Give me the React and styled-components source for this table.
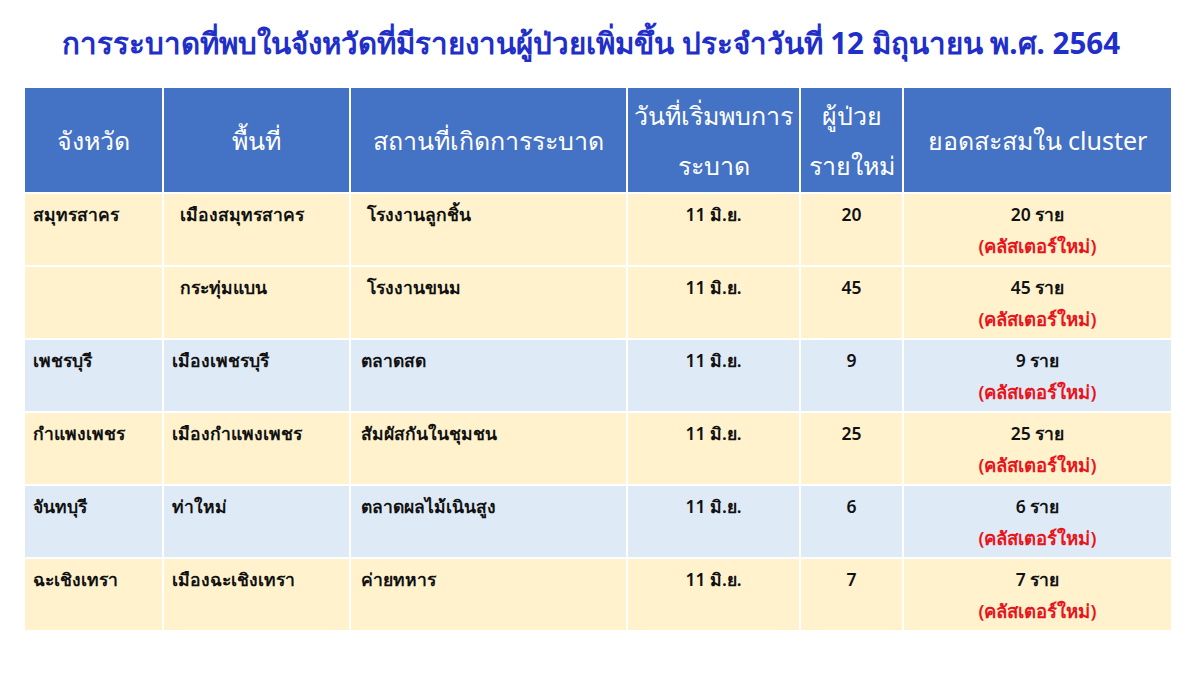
import React from "react";
import styled, { createGlobalStyle } from "styled-components";

const GlobalStyle = createGlobalStyle`
  html, body {
    margin: 0;
    padding: 0;
    background: #ffffff;
  }
  body {
    font-family: "Noto Sans", "Liberation Sans", "DejaVu Sans", sans-serif;
  }
`;

const Page = styled.div`
  width: 1200px;
  height: 675px;
  padding: 20px 0 0 25px;
  box-sizing: border-box;
`;

const Title = styled.h1`
  margin: 0 0 22px -24px;
  width: 1180px;
  text-align: center;
  font-size: 29.5px;
  font-weight: 700;
  line-height: 46px;
  color: #1f2fc8;
  white-space: nowrap;
`;

const Table = styled.table`
  border-collapse: collapse;
  table-layout: fixed;
  width: 1146px;
`;

const Th = styled.th`
  background: #4472c4;
  color: #ffffff;
  font-weight: 400;
  font-size: 25px;
  line-height: 50px;
  height: 104px;
  padding: 0 1px;
  border: 2px solid #ffffff;
  border-top: none;
  text-align: center;
  vertical-align: middle;
  white-space: nowrap;
  &:first-child { border-left: none; }
  &:last-child { border-right: none; }
`;

const Row = styled.tr`
  background: ${(p) => (p.$tone === "blue" ? "#deeaf6" : "#fff2cc")};
`;

const Td = styled.td`
  height: 73px;
  box-sizing: border-box;
  padding: 4px 0 0 ${(p) => p.$indent || 0}px;
  border: 2px solid #ffffff;
  vertical-align: top;
  text-align: ${(p) => (p.$center ? "center" : "left")};
  font-size: 17.5px;
  font-weight: 600;
  line-height: 32px;
  color: #111111;
  &:first-child { border-left: none; }
  &:last-child { border-right: none; }
`;

const Note = styled.div`
  color: #e8141b;
  font-size: 18.5px;
`;

const rows = [
  { prov: "สมุทรสาคร", area: "เมืองสมุทรสาคร", place: "โรงงานลูกชิ้น", n: 20, tone: "yellow", wide: true },
  { prov: "", area: "กระทุ่มแบน", place: "โรงงานขนม", n: 45, tone: "yellow", wide: true },
  { prov: "เพชรบุรี", area: "เมืองเพชรบุรี", place: "ตลาดสด", n: 9, tone: "blue" },
  { prov: "กำแพงเพชร", area: "เมืองกำแพงเพชร", place: "สัมผัสกันในชุมชน", n: 25, tone: "yellow" },
  { prov: "จันทบุรี", area: "ท่าใหม่", place: "ตลาดผลไม้เนินสูง", n: 6, tone: "blue" },
  { prov: "ฉะเชิงเทรา", area: "เมืองฉะเชิงเทรา", place: "ค่ายทหาร", n: 7, tone: "yellow" },
];

export default function App() {
  return (
    <Page>
      <GlobalStyle />
      <Title>การระบาดที่พบในจังหวัดที่มีรายงานผู้ป่วยเพิ่มขึ้น ประจำวันที่ 12 มิถุนายน พ.ศ. 2564</Title>
      <Table>
        <colgroup>
          <col style={{ width: 138 }} />
          <col style={{ width: 187 }} />
          <col style={{ width: 277 }} />
          <col style={{ width: 173 }} />
          <col style={{ width: 103 }} />
          <col style={{ width: 268 }} />
        </colgroup>
        <thead>
          <tr>
            <Th>จังหวัด</Th>
            <Th>พื้นที่</Th>
            <Th>สถานที่เกิดการระบาด</Th>
            <Th>วันที่เริ่มพบการ<br />ระบาด</Th>
            <Th>ผู้ป่วย<br />รายใหม่</Th>
            <Th>ยอดสะสมใน cluster</Th>
          </tr>
        </thead>
        <tbody>
          {rows.map((r, i) => (
            <Row key={i} $tone={r.tone}>
              <Td $indent={8}>{r.prov}</Td>
              <Td $indent={r.wide ? 16 : 8}>{r.area}</Td>
              <Td $indent={r.wide ? 16 : 10}>{r.place}</Td>
              <Td $center>11 มิ.ย.</Td>
              <Td $center>{r.n}</Td>
              <Td $center>
                {r.n} ราย
                <Note>(คลัสเตอร์ใหม่)</Note>
              </Td>
            </Row>
          ))}
        </tbody>
      </Table>
    </Page>
  );
}
